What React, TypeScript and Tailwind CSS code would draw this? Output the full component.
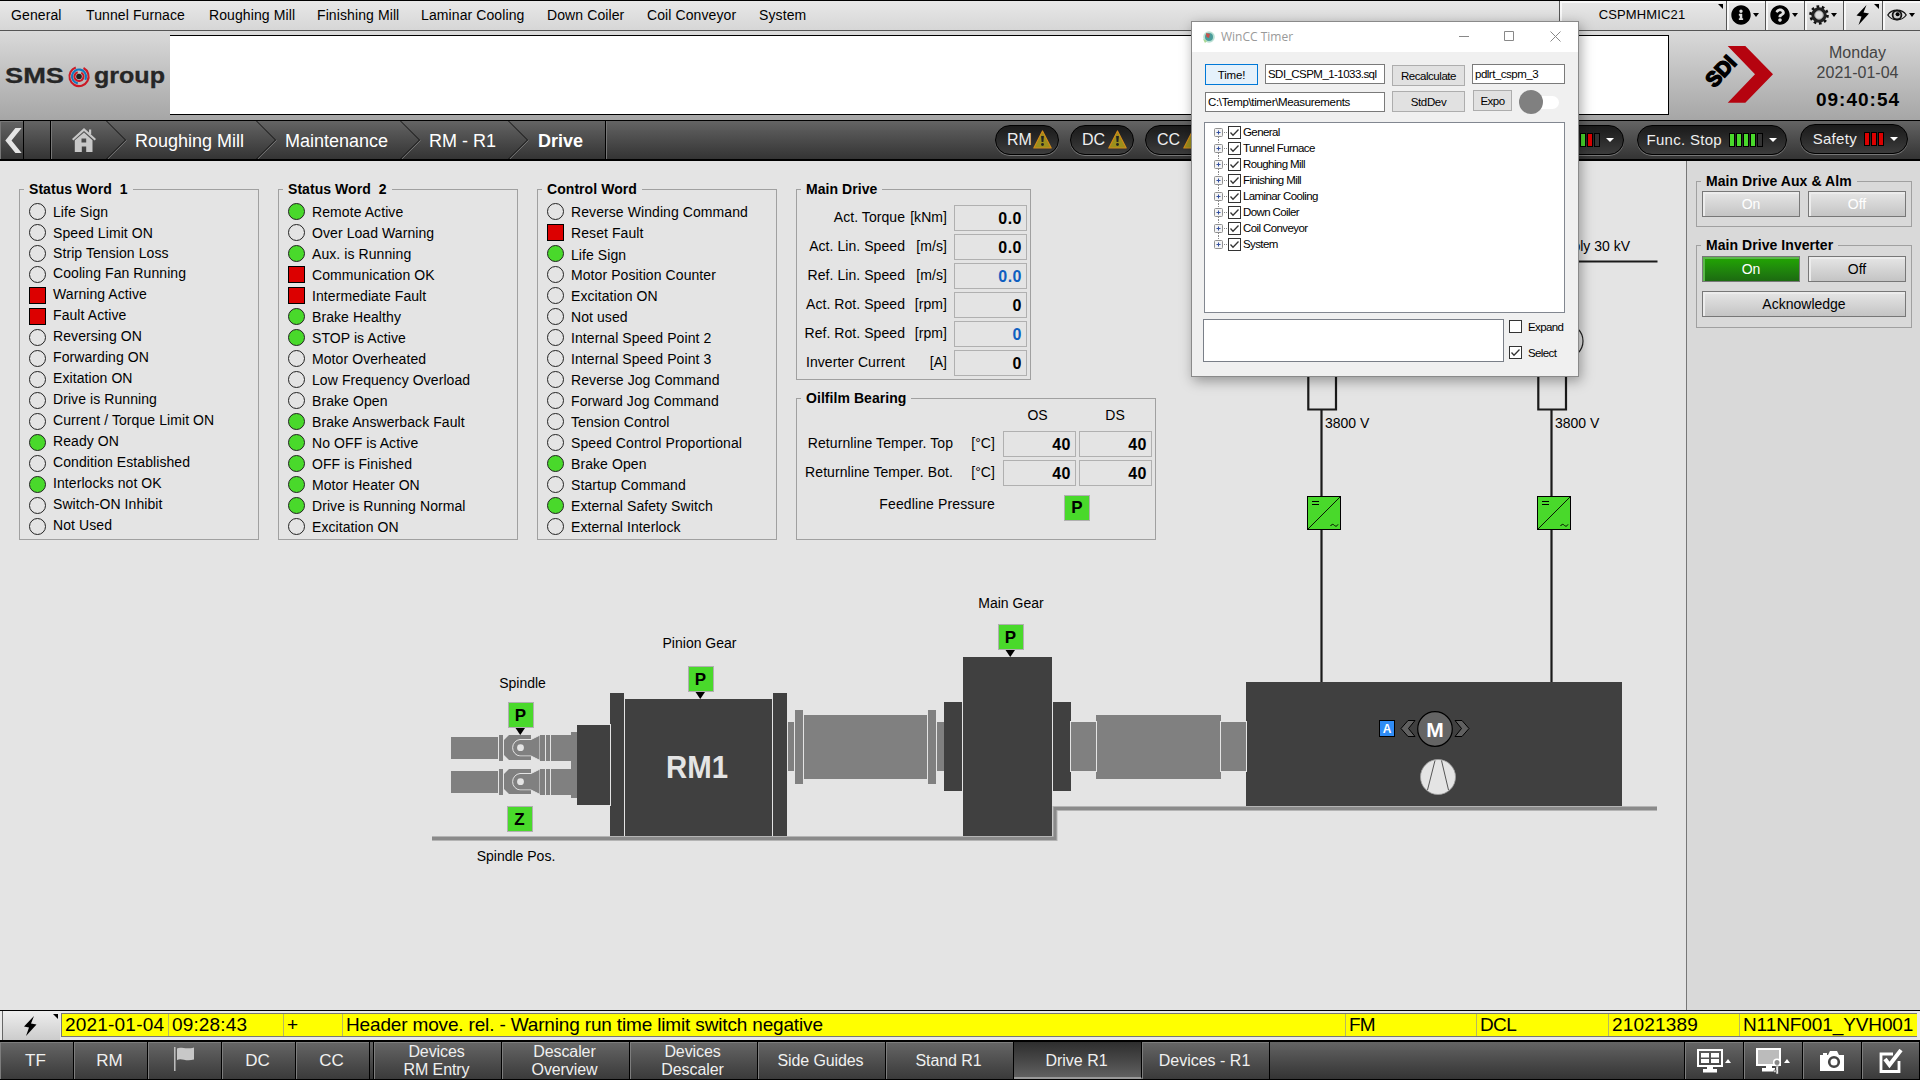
import React from "react";
import { FaInfoCircle, FaQuestionCircle } from "react-icons/fa";

type State = "off" | "on" | "err";
type Row = [string, State, number?];

const status1: Row[] = [
  ["Life Sign", "off"],
  ["Speed Limit ON", "off"],
  ["Strip Tension Loss", "off", 1],
  ["Cooling Fan Running", "off", 2],
  ["Warning Active", "err", 2],
  ["Fault Active", "err", 2],
  ["Reversing ON", "off", 2],
  ["Forwarding ON", "off", 2],
  ["Exitation ON", "off", 2],
  ["Drive is Running", "off", 2],
  ["Current / Torque Limit ON", "off", 2],
  ["Ready ON", "on", 2],
  ["Condition Established", "off", 2],
  ["Interlocks not OK", "on", 2],
  ["Switch-ON Inhibit", "off", 2],
  ["Not Used", "off", 2],
];
const status2: Row[] = [
  ["Remote Active", "on"],
  ["Over Load Warning", "off"],
  ["Aux. is Running", "on"],
  ["Communication OK", "err"],
  ["Intermediate Fault", "err"],
  ["Brake Healthy", "on"],
  ["STOP is Active", "on"],
  ["Motor Overheated", "off"],
  ["Low Frequency Overload", "off"],
  ["Brake Open", "off"],
  ["Brake Answerback Fault", "on"],
  ["No OFF is Active", "on"],
  ["OFF is Finished", "on"],
  ["Motor Heater ON", "on"],
  ["Drive is Running Normal", "on"],
  ["Excitation ON", "off"],
];
const control: Row[] = [
  ["Reverse Winding Command", "off"],
  ["Reset Fault", "err"],
  ["Life Sign", "on", -1],
  ["Motor Position Counter", "off"],
  ["Excitation ON", "off"],
  ["Not used", "off"],
  ["Internal Speed Point 2", "off"],
  ["Internal Speed Point 3", "off"],
  ["Reverse Jog Command", "off"],
  ["Forward Jog Command", "off"],
  ["Tension Control", "off"],
  ["Speed Control Proportional", "off"],
  ["Brake Open", "on"],
  ["Startup Command", "off"],
  ["External Safety Switch", "on"],
  ["External Interlock", "off"],
];

function Group({ title, className, children }: { title: string; className: string; children: React.ReactNode }) {
  return (
    <fieldset className={`border border-[#a0a0a0] ${className}`}>
      <legend className="ml-1 h-5 px-[5px] text-sm leading-5 font-bold tracking-[0.06px] whitespace-pre">{title}</legend>
      {children}
    </fieldset>
  );
}

function Lamp({ state }: { state: State }) {
  if (state === "err") return <span className="size-[17px] shrink-0 border border-black bg-[#dc0000]" />;
  if (state === "on") return <span className="size-[17px] shrink-0 rounded-full border border-[#222] bg-[#49d92b]" />;
  return <span className="size-[17px] shrink-0 rounded-full border border-[#222]" />;
}

function StatusList({ title, rows }: { title: string; rows: Row[] }) {
  return (
    <Group title={title} className="h-[361px] w-60">
      <ul className="pt-0.5 pl-[9px]">
        {rows.map(([label, state, lift]) => (
          <li key={label} className="flex h-[21px] items-center gap-[7px] text-sm tracking-[0.08px] whitespace-nowrap">
            <Lamp state={state} />
            <span className={lift === 2 ? "pb-[3px]" : lift === 1 ? "pb-[2px]" : lift === -1 ? "pt-[2px]" : ""}>{label}</span>
          </li>
        ))}
      </ul>
    </Group>
  );
}

function Value({ v, blue }: { v: string; blue?: boolean }) {
  return (
    <span
      className={`h-[26px] w-[73px] border border-[#b0b0b0] pr-1 text-right text-base leading-[25px] font-bold tracking-[0.5px] ${
        blue ? "text-[#0f5fc0]" : "text-black"
      }`}
    >
      {v}
    </span>
  );
}

const driveRows: [string, string, string, boolean?][] = [
  ["Act. Torque", "[kNm]", "0.0"],
  ["Act. Lin. Speed", "[m/s]", "0.0"],
  ["Ref. Lin. Speed", "[m/s]", "0.0", true],
  ["Act. Rot. Speed", "[rpm]", "0"],
  ["Ref. Rot. Speed", "[rpm]", "0", true],
  ["Inverter Current", "[A]", "0"],
];

function Bolt({ className }: { className: string }) {
  return (
    <svg viewBox="0 0 14 20" className={className}>
      <path d="M11 0 L1 10.5 L6 11.5 L3 20 L13.5 8.5 L8 7.5 Z" fill="#000" />
    </svg>
  );
}

function Caret({ color = "#000" }: { color?: string }) {
  return (
    <svg viewBox="0 0 8 4" className="h-1 w-2 shrink-0">
      <path d="M0 0H8L4 4Z" fill={color} />
    </svg>
  );
}

function SmallCaret() {
  return (
    <svg viewBox="0 0 6 4" className="h-1 w-1.5">
      <path d="M0 0H6L3 4Z" />
    </svg>
  );
}

function MenuCell({ children, w }: { children: React.ReactNode; w: string }) {
  return (
    <div className={`relative flex h-[29px] items-center justify-center border-l border-[#555] pr-0.5 pb-px shadow-[inset_2px_2px_0_#f8f8f8] ${w}`}>
      {children}
    </div>
  );
}

function Corner() {
  return (
    <svg viewBox="0 0 5 5" className="absolute top-[3px] right-[3px] size-[5px]">
      <path d="M0 0H5V5Z" fill="#000" />
    </svg>
  );
}

const menuItems: [string, string][] = [
  ["General", "w-[75px]"],
  ["Tunnel Furnace", "w-[123px]"],
  ["Roughing Mill", "w-[108px]"],
  ["Finishing Mill", "w-[104px]"],
  ["Laminar Cooling", "w-[126px]"],
  ["Down Coiler", "w-[100px]"],
  ["Coil Conveyor", "w-[112px]"],
  ["System", "w-[80px]"],
];

function MenuBar() {
  return (
    <div className="flex h-[31px] border-t border-b border-t-black border-b-[#555] bg-linear-to-b from-[#e8e8e8] to-[#d6d6d6]">
      <nav className="flex flex-1 items-center pb-px pl-[11px] text-sm">
        {menuItems.map(([m, w]) => (
          <span key={m} className={`whitespace-nowrap tracking-[0.1px] ${w}`}>
            {m}
          </span>
        ))}
      </nav>
      <MenuCell w="w-[167px]">
        <span className="text-[13px] tracking-[0.15px]">CSPMHMIC21</span>
        <Corner />
      </MenuCell>
      <MenuCell w="w-[39px] gap-[2px]">
        <FaInfoCircle className="size-5" />
        <SmallCaret />
      </MenuCell>
      <MenuCell w="w-[39px] gap-[2px]">
        <FaQuestionCircle className="size-5" />
        <SmallCaret />
      </MenuCell>
      <MenuCell w="w-[39px] gap-[2px]">
        <svg viewBox="0 0 20 20" className="size-5">
          <circle cx="10" cy="10" r="8.3" fill="none" stroke="#111" strokeWidth="3" strokeDasharray="2.6 2.61" />
          <circle cx="10" cy="10" r="6" fill="none" stroke="#222" strokeWidth="3.4" />
          <circle cx="10" cy="10" r="4.3" fill="#ddd" stroke="#888" strokeWidth="1" />
        </svg>
        <SmallCaret />
      </MenuCell>
      <MenuCell w="w-[39px]">
        <Bolt className="h-5 w-[15px]" />
        <Corner />
      </MenuCell>
      <MenuCell w="w-[38px] gap-[2px]">
        <svg viewBox="0 0 20 14" className="h-3.5 w-5">
          <path d="M0.8 7C5 0.6 15 0.6 19.2 7C15 13.4 5 13.4 0.8 7Z" fill="#ddd" stroke="#111" strokeWidth="1.3" />
          <circle cx="10" cy="7" r="4.4" fill="#ccc" stroke="#111" strokeWidth="1.8" />
          <circle cx="10.6" cy="6.2" r="2" />
        </svg>
        <SmallCaret />
      </MenuCell>
    </div>
  );
}

function Header() {
  return (
    <header className="flex h-[89px] items-start bg-linear-to-b from-[#dadada] to-[#a6a6a6] pt-1">
      <div className="flex h-[81px] w-[170px] items-center pl-[5px]">
        <svg viewBox="0 0 160 30" className="h-[30px] w-40" fontFamily="'Liberation Sans', Arial, sans-serif" fontWeight="bold">
          <g fontSize="21.5" fill="#262626" stroke="#262626" strokeWidth="0.3">
            <text x="0" y="22" textLength="59" lengthAdjust="spacingAndGlyphs">SMS</text>
            <text x="89" y="22" textLength="71" lengthAdjust="spacingAndGlyphs">group</text>
          </g>
          <g fill="none" strokeWidth="2.1">
            <circle cx="74" cy="15.5" r="9.6" stroke="#cc1a26" strokeDasharray="52 8.4" transform="rotate(-62 74 15.5)" />
            <circle cx="74" cy="15.5" r="7" stroke="#1478be" strokeDasharray="35 9" transform="rotate(100 74 15.5)" />
            <circle cx="74" cy="15.5" r="4.5" stroke="#cc1a26" strokeDasharray="24 4.3" transform="rotate(-60 74 15.5)" />
          </g>
          <circle cx="74" cy="15.5" r="2.8" fill="#222" />
        </svg>
      </div>
      <div className="h-20 w-[1499px] border-y border-r border-black bg-white" />
      <svg viewBox="1690 35 110 81" className="ml-[21px] h-[81px] w-[110px]">
        <path d="M1727.7 46H1745.3L1773 74.3L1745.3 102.7H1727.7L1755 74.3Z" fill="#b5030f" />
        <text
          x="0"
          y="0"
          transform="translate(1714.5 88.5) rotate(-47)"
          fontFamily="'Liberation Sans', Arial, sans-serif"
          fontWeight="bold"
          fontSize="21"
          textLength="34"
          lengthAdjust="spacingAndGlyphs"
          fill="#000"
          stroke="#000"
          strokeWidth="1.5"
        >
          SDI
        </text>
      </svg>
      <div className="flex w-[115px] flex-col items-center pt-2 text-base leading-5 text-[#444]">
        <span>Monday</span>
        <span>2021-01-04</span>
        <span className="pt-[5px] pl-px text-[19px] leading-6 font-bold tracking-[1px] text-black">09:40:54</span>
      </div>
    </header>
  );
}

function Chevron() {
  return (
    <svg viewBox="0 0 21 38" className="h-[38px] w-[21px] shrink-0" fill="none">
      <path d="M0.5 0L19.5 19L0.5 38" stroke="#111" />
      <path d="M1.8 38L20.6 19.4" stroke="#777" />
    </svg>
  );
}

function WarnPill({ label }: { label: string }) {
  return (
    <div className="flex h-[30px] w-16 items-center rounded-full border border-black bg-linear-to-b from-[#1a1a1a] to-[#3c3c3c] pl-[11px] shadow-[0_1px_0_#777]">
      <span className="w-[26px] text-base leading-5 text-[#eee]">{label}</span>
      <svg viewBox="0 0 19 19" className="mb-0.5 size-[19px]">
        <path d="M9.5 1L18.2 18H0.8Z" fill="#9c8f1c" stroke="#d18a1a" strokeWidth="1.2" strokeLinejoin="round" />
        <path d="M8.1 6H10.9L10.4 12H8.6Z" fill="#222" />
        <circle cx="9.5" cy="14.5" r="1.4" fill="#222" />
      </svg>
    </div>
  );
}

const barColor: Record<string, string> = { g: "bg-[#49d92b]", r: "bg-[#dc0000]", n: "bg-[#333]" };

function BarPill({ label, bars, w }: { label: string; bars: string; w: string }) {
  return (
    <div className={`flex h-[30px] items-center justify-end rounded-full border border-black bg-linear-to-b from-[#1a1a1a] to-[#3c3c3c] pr-[9px] shadow-[0_1px_0_#777] ${w}`}>
      <span className="mr-[7px] text-[15px] leading-5 tracking-[0.3px] whitespace-nowrap text-[#eee]">{label}</span>
      <span className="mr-1.5 flex gap-px">
        {bars.split("").map((b, i) => (
          <i key={i} className={`block h-3.5 w-1.5 border border-black ${barColor[b]}`} />
        ))}
      </span>
      <Caret color="#fff" />
    </div>
  );
}

function Breadcrumb() {
  return (
    <div className="flex h-[41px] border-t border-b-2 border-black bg-linear-to-b from-[#646464] to-[#343434] text-lg leading-[40px] text-white">
      <div className="flex w-[24px] items-center justify-center border-r border-black shadow-[inset_1px_1px_0_#777]">
        <svg viewBox="0 0 18 26" className="ml-[3px] h-[25px] w-[18px]">
          <path d="M11.5 0H18L7.5 13L18 26H11.5L1 13Z" fill="#e4e4e4" />
        </svg>
      </div>
      <div className="w-[27px] border-r border-black" />
      <div className="flex w-[55px] items-center pl-[21px] shadow-[inset_1px_0_0_#777]">
        <svg viewBox="0 0 24 24" className="h-6 w-6 shrink-0" fill="#c8c8c8">
          <path d="M12 0L24 11L22.6 12.6L12 3L1.4 12.6L0 11Z" />
          <path d="M17 1.5H19.2V6H17Z" />
          <path fillRule="evenodd" d="M12 4.5L20.5 12.2V24H14.2V18.5H9.8V24H2.8V12.2ZM9.5 10.5V14.5H14.2V10.5Z" />
        </svg>
      </div>
      <Chevron />
      <span className="w-[129px] pl-2 whitespace-nowrap">Roughing Mill</span>
      <Chevron />
      <span className="w-[123px] pl-2 whitespace-nowrap">Maintenance</span>
      <Chevron />
      <span className="w-[87px] pl-2 whitespace-nowrap">RM - R1</span>
      <Chevron />
      <span className="w-[77px] border-r border-black pl-[9px] font-bold">Drive</span>
      <div className="flex flex-1 items-start pt-1 pl-[389px] shadow-[inset_1px_0_0_#777]">
        <div className="flex gap-[11px]">
          <WarnPill label="RM" />
          <WarnPill label="DC" />
          <WarnPill label="CC" />
        </div>
        <div className="flex-1" />
        <div className="flex gap-[13px] pr-3">
          <BarPill label="Interlock" bars="grgrn" w="w-[140px]" />
          <BarPill label="Func. Stop" bars="ggggn" w="w-[150px]" />
          <div className="-mt-px">
            <BarPill label="Safety" bars="rrr" w="w-[108px]" />
          </div>
        </div>
      </div>
    </div>
  );
}

function PBox({ x, y, letter, arrow }: { x: number; y: number; letter: string; arrow?: boolean }) {
  return (
    <g>
      <rect x={x + 0.5} y={y + 0.5} width="25" height="25" fill="#49d92b" stroke="#b0b0b0" />
      <text x={x + 12.5} y={y + 19} textAnchor="middle" fontSize="17" fontWeight="bold">{letter}</text>
      {arrow && <path d={`M${x + 7.5} ${y + 26}h9.5l-4.75 7z`} />}
    </g>
  );
}

function Spindle({ dy }: { dy: number }) {
  return (
    <g transform={`translate(0 ${dy})`} fill="#808080">
      <rect x="451" y="737" width="47" height="22" />
      <rect x="499" y="735" width="4" height="26" />
      <path d="M509 735H531V760H509L504 755V740Z" />
      <path d="M531 739.5H520A8.3 8.3 0 0 0 520 756H531L540 760.5V735Z" stroke="#e4e4e4" strokeWidth="1" />
      <path d="M511.5 735H531V738.9H511.5ZM511.5 756.5H531V760H511.5Z" />
      <circle cx="520.5" cy="747.7" r="3.4" fill="#e4e4e4" />
      <rect x="540" y="735" width="5" height="26" />
      <rect x="546" y="735" width="4" height="26" />
      <rect x="551" y="735" width="20" height="26" />
    </g>
  );
}

function Inverter({ x }: { x: number }) {
  return (
    <g>
      <g stroke="#1a1a1a" strokeWidth="2.2" fill="none">
        <path d={`M${x + 1.3} 360V409.5H${x + 29}V360M${x + 14.5} 410V496M${x + 14.5} 530V682`} />
      </g>
      <rect x={x + 0.5} y="496.5" width="33" height="33" fill="#49d92b" stroke="#000" />
      <path d={`M${x + 1} 529L${x + 33} 497`} stroke="#000" strokeWidth="0.9" />
      <path d={`M${x + 5} 501.5h7M${x + 5} 504.5h7`} stroke="#000" />
      <path d={`M${x + 23.5} 526c2 -3 3.5 -1 4 -0.5s2 1.5 3.5 -1`} stroke="#000" fill="none" />
      <text x={x + 18} y="428" fontSize="14">3800 V</text>
    </g>
  );
}

function Plant() {
  const dark = "#404040";
  return (
    <svg viewBox="0 161 1686 849" className="absolute top-0 left-0 h-[849px] w-[1686px]" fontFamily="'Liberation Sans', Arial, sans-serif">
      <path d="M1300 261.5H1657.5" stroke="#1a1a1a" strokeWidth="2.2" />
      <text x="1630" y="251" fontSize="14" textAnchor="end">Main Supply 30 kV</text>
      <circle cx="1566" cy="341" r="17" fill="none" stroke="#222" strokeWidth="1.2" />
      <Inverter x={1307} />
      <Inverter x={1537} />

      <g fill="none" stroke="#b4b4b4" strokeWidth="5">
        <path d="M432 838.5H1055V808.5H1657" />
      </g>
      <g fill="none" stroke="#8a8a8a" strokeWidth="3">
        <path d="M432 838.5H1055V808.5H1657" />
      </g>

      <Spindle dy={0} />
      <Spindle dy={34} />
      <rect x="571" y="732" width="6" height="66" fill="#808080" />
      <g fill={dark}>
        <rect x="577" y="725" width="33" height="80" />
        <rect x="610" y="693" width="14" height="143" />
        <rect x="625" y="699" width="147" height="137" />
        <rect x="773" y="693" width="14" height="143" />
        <rect x="944" y="702" width="19" height="89" />
        <rect x="963" y="657" width="89" height="179" />
        <rect x="1052" y="702" width="19" height="89" />
        <rect x="1246" y="682" width="376" height="124" />
      </g>
      <path d="M610.5 724V806M962.5 701V792M1052.5 701V792" stroke="#e4e4e4" />
      <g fill="#808080">
        <rect x="788" y="722" width="6" height="49" />
        <rect x="795" y="710" width="8" height="74" />
        <rect x="804" y="715" width="123" height="64" />
        <rect x="928" y="710" width="8" height="74" />
        <rect x="937" y="722" width="7" height="49" />
        <rect x="1071" y="722" width="25" height="49" />
        <rect x="1096" y="715" width="125" height="64" />
        <rect x="1221" y="722" width="25" height="49" />
      </g>
      <path d="M787.5 721V772M1070.5 721V772M1096.5 721V772M1220.5 721V772M1246.5 721V772" stroke="#e4e4e4" />

      <text x="666" y="777.5" fontSize="31" fontWeight="bold" textLength="62" lengthAdjust="spacingAndGlyphs" fill="#e4e4e4">RM1</text>

      <g fontSize="14" textAnchor="middle">
        <text x="1011" y="608">Main Gear</text>
        <text x="699.5" y="648">Pinion Gear</text>
        <text x="522.5" y="688">Spindle</text>
        <text x="516" y="861">Spindle Pos.</text>
      </g>
      <PBox x={998} y={624} letter="P" arrow />
      <PBox x={688} y={666} letter="P" arrow />
      <PBox x={508} y={702} letter="P" arrow />
      <PBox x={507} y={806} letter="Z" />

      <rect x="1379.5" y="720.5" width="15" height="16" fill="#2f8cf5" stroke="#000" />
      <text x="1387" y="733" fontSize="12" fontWeight="bold" fill="#fff" textAnchor="middle">A</text>
      <path d="M1408 720.5H1415L1408.5 728.5L1415 736.5H1408L1401 728.5Z" fill="#606060" stroke="#000" />
      <path d="M1462 720.5H1455L1461.5 728.5L1455 736.5H1462L1469 728.5Z" fill="#606060" stroke="#000" />
      <circle cx="1435" cy="729" r="17.3" fill="#646464" stroke="#000" strokeWidth="1.2" />
      <text x="1435" y="737" fontSize="21" fontWeight="bold" fill="#fff" textAnchor="middle">M</text>
      <circle cx="1438" cy="777" r="17.5" fill="#e4e4e4" stroke="#a0a0a0" strokeWidth="0.8" />
      <path d="M1435 760.5L1427.5 790M1441.5 760.5L1448.5 790" stroke="#555" />
    </svg>
  );
}

function Main() {
  return (
    <main className="relative w-[1686px] bg-[#e4e4e4] pt-[18px] pl-[19px]">
      <div className="flex gap-[19px]">
        <StatusList title={"Status Word  1"} rows={status1} />
        <StatusList title={"Status Word  2"} rows={status2} />
        <StatusList title="Control Word" rows={control} />
        <div className="flex flex-col gap-2">
          <Group title="Main Drive" className="h-[201px] w-[235px]">
            <div className="flex flex-col gap-[3px] pt-1.5 pr-[3px]">
              {driveRows.map(([label, unit, v, blue]) => (
                <div key={label} className="flex h-[26px] justify-end text-sm leading-6 tracking-[0.06px] whitespace-nowrap">
                  <span>{label}</span>
                  <span className="mr-[7px] w-[42px] text-right">{unit}</span>
                  <Value v={v} blue={blue} />
                </div>
              ))}
            </div>
          </Group>
          <Group title="Oilfilm Bearing" className="h-[152px] w-[360px]">
            <div className="flex flex-col gap-[3px] pt-px pr-[3px] text-sm">
              <div className="flex h-[19px] justify-end leading-3">
                <span className="mr-1 w-[73px] text-center">OS</span>
                <span className="w-[74px] text-center">DS</span>
              </div>
              {["Top", "Bot."].map((pos) => (
                <div key={pos} className="flex h-[26px] justify-end leading-6 tracking-[0.08px] whitespace-nowrap">
                  <span>Returnline Temper. {pos}</span>
                  <span className="mr-[8px] w-[42px] text-right">[°C]</span>
                  <Value v="40" />
                  <span className="w-[3px]" />
                  <Value v="40" />
                </div>
              ))}
              <div className="flex justify-end pt-[6px] pr-[62px]">
                <span className="mr-[69px] leading-[19px] tracking-[0.12px]">Feedline Pressure</span>
                <span className="flex size-[26px] items-center justify-center border border-[#b0b0b0] bg-[#49d92b] text-[17px] font-bold">P</span>
              </div>
            </div>
          </Group>
        </div>
      </div>
      <Plant />
    </main>
  );
}

function Button({ label, kind, w }: { label: string; kind?: "disabled" | "active"; w: string }) {
  const look =
    kind === "active"
      ? "bg-linear-to-b from-[#22a800] to-[#1c6a10] text-white shadow-[inset_2px_2px_0_#5bb84a]"
      : kind === "disabled"
        ? "bg-linear-to-b from-[#e6e6e6] to-[#c4c4c4] text-white shadow-[inset_2px_2px_0_#ececec]"
        : "bg-linear-to-b from-[#e6e6e6] to-[#c4c4c4] text-black shadow-[inset_2px_2px_0_#ececec]";
  return <div className={`h-[26px] border border-[#777] text-center text-sm leading-6 ${look} ${w}`}>{label}</div>;
}

function SidePanel() {
  return (
    <aside className="flex flex-1 flex-col gap-2 border-l border-[#777] bg-[#d9d9d9] pt-2.5 pl-[9px]">
      <Group title="Main Drive Aux & Alm" className="h-[56px] w-[216px]">
        <div className="flex gap-2 pl-[5px]">
          <Button label="On" kind="disabled" w="w-[98px]" />
          <Button label="Off" kind="disabled" w="w-[98px]" />
        </div>
      </Group>
      <Group title="Main Drive Inverter" className="h-[93px] w-[216px]">
        <div className="flex flex-wrap gap-x-2 gap-y-[9px] pt-px pl-[5px]">
          <Button label="On" kind="active" w="w-[98px]" />
          <Button label="Off" w="w-[98px]" />
          <Button label="Acknowledge" w="w-[204px]" />
        </div>
      </Group>
    </aside>
  );
}

function AlarmRow() {
  const cell = "border-r border-[#b8b860] pl-[3px]";
  return (
    <div className="flex h-[31px] border-t border-b border-black bg-[#e8e8e8]">
      <div className="relative mr-px ml-0.5 flex w-[58px] items-center justify-center border-l border-[#666] bg-linear-to-b from-[#eee] to-[#ccc] pr-1">
        <Bolt className="h-5 w-4" />
        <svg viewBox="0 0 5 5" className="absolute top-[3px] right-[2px] size-[5px]"><path d="M0 0H5V5Z" /></svg>
      </div>
      <div className="mt-0.5 mb-[3px] flex flex-1 border-y border-l border-[#777] bg-[#ffff00] text-[19px] leading-[22px] whitespace-nowrap">
        <span className={`w-[107px] tracking-[0.2px] ${cell}`}>2021-01-04</span>
        <span className={`w-[115px] tracking-[0.15px] ${cell}`}>09:28:43</span>
        <span className={`w-[59px] ${cell}`}>+</span>
        <span className={`w-[1003px] tracking-[-0.16px] ${cell}`}>Header move. rel. - Warning run time limit switch negative</span>
        <span className={`w-[131px] tracking-[-0.8px] ${cell}`}>FM</span>
        <span className={`w-[132px] tracking-[-0.6px] ${cell}`}>DCL</span>
        <span className={`w-[131px] tracking-[0.2px] ${cell}`}>21021389</span>
        <span className="flex-1 pl-[3px] tracking-[-0.1px]">N11NF001_YVH001</span>
      </div>
      <div className="w-[3px]" />
    </div>
  );
}

const tab =
  "flex items-center justify-center border-r border-black shadow-[inset_1px_1px_0_#7d7d7d] bg-linear-to-b from-[#666] to-[#3a3a3a]";

function BottomNav() {
  return (
    <div className="flex h-[39px] border-t border-b border-black bg-linear-to-b from-[#646464] to-[#343434] text-center text-base leading-[18px] text-[#f0f0f0]">
      {["TF", "RM", "flag", "DC", "CC"].map((t) => (
        <div key={t} className={`w-[74px] pr-0.5 text-[17px] ${tab}`}>
          {t === "flag" ? (
            <svg viewBox="0 0 20 24" className="mb-1 h-6 w-5">
              <path d="M0.8 0V24" stroke="#c8c8c8" strokeWidth="1.4" />
              <path d="M3 1.5C7 -1 11 3 20 0.5V12.5C11 15 8 10.5 3 13Z" fill="#c8c8c8" />
            </svg>
          ) : (
            t
          )}
        </div>
      ))}
      <div className="w-1 border-r border-black" />
      {["Devices\nRM Entry", "Descaler\nOverview", "Devices\nDescaler", "Side Guides", "Stand R1"].map((t) => (
        <div key={t} className={`w-32 pr-0.5 tracking-[-0.1px] whitespace-pre ${tab}`}>{t}</div>
      ))}
      <div className="flex w-32 items-center justify-center border-r border-b-2 border-r-black border-b-[#999] bg-linear-to-b from-[#2e2e2e] to-[#606060] pt-0.5 pr-0.5">
        Drive R1
      </div>
      <div className={`w-32 pr-0.5 ${tab}`}>Devices - R1</div>
      <div className="flex-1 border-r border-black" />
      <div className={`w-[59px] gap-0.5 ${tab}`}>
        <svg viewBox="0 0 26 24" className="h-6 w-[26px]" fill="#fff">
          <path fillRule="evenodd" d="M0 0H26V18H0ZM2 2V16H24V2Z" />
          <path d="M4 4H12V8.4H4ZM14 4H22V8.4H14ZM4 10H12V14H4ZM14 10H22V14H14ZM10 18H16V20H20V23.5H6V20H10Z" />
        </svg>
        <svg viewBox="0 0 6 4" className="h-1 w-1.5"><path d="M0 4H6L3 0Z" fill="#fff" /></svg>
      </div>
      <div className={`w-[59px] gap-0.5 ${tab}`}>
        <svg viewBox="0 0 26 26" className="h-[26px] w-[26px]" fill="#fff">
          <path d="M0 0H25V18H0Z" />
          <path d="M2 2H23V16H2Z" fill="#bbb" />
          <path d="M10 18H16V20H19V23.5H6V20H10Z" />
          <circle cx="21" cy="14.5" r="3.3" fill="#888" stroke="#fff" strokeWidth="1.6" />
          <path d="M20 18H22.3V26H20ZM18 22H20V24.5H18Z" stroke="#333" strokeWidth="0.5" />
        </svg>
        <svg viewBox="0 0 6 4" className="h-1 w-1.5"><path d="M0 4H6L3 0Z" fill="#fff" /></svg>
      </div>
      <div className={`w-[59px] ${tab}`}>
        <svg viewBox="0 0 24 20" className="h-5 w-6" fill="#fff">
          <path d="M0 4H3V2H7V4H8L10 0H17L19 4H24V20H0Z" />
          <circle cx="14" cy="11" r="4.8" fill="#fff" stroke="#444" strokeWidth="2.6" />
        </svg>
      </div>
      <div className={`w-[58px] ${tab}`}>
        <svg viewBox="0 0 24 24" className="h-6 w-6" fill="none" stroke="#fff">
          <path d="M20 12V22.5H2V5H14" strokeWidth="2.8" />
          <path d="M6 10L10.5 16L22 1" strokeWidth="4" />
        </svg>
      </div>
    </div>
  );
}

function Check({ checked }: { checked?: boolean }) {
  return (
    <svg viewBox="0 0 13 13" className="size-[13px] shrink-0" fill="none">
      <rect x="0.5" y="0.5" width="12" height="12" fill="#fff" stroke="#333" />
      {checked && <path d="M2.5 6.5L5 9.2L10.5 3.5" stroke="#333" strokeWidth="1.3" />}
    </svg>
  );
}

const btn = "h-[21px] border border-[#adadad] bg-[#e1e1e1] text-center leading-[20px]";
const input = "h-5 border border-[#7a7a7a] bg-white pl-[2px] leading-[18px]";

function TimerDialog() {
  return (
    <div className="absolute top-[21px] left-[1191px] flex h-[356px] w-[388px] flex-col border border-[#8a8a8a] bg-[#f0f0f0] text-[11.5px] tracking-[-0.6px] text-black shadow-[2px_4px_12px_rgba(0,0,0,0.35)]">
      <div className="flex h-[30px] items-center bg-white pl-2.5">
        <svg viewBox="0 0 14 14" className="size-3.5">
          <circle cx="7" cy="7" r="5.8" fill="#a8d8c8" opacity="0.8" />
          <circle cx="7" cy="7" r="4" fill="#4a9c9a" />
          <path d="M4 3L8 4L7 8L4.5 7Z" fill="#c8504a" />
          <path d="M1 9L5 11L3 13Z" fill="#a8d890" />
        </svg>
        <span className="ml-[5px] flex-1 font-['Open_Sans',sans-serif] text-xs text-[#999] tracking-[0px]">WinCC Timer</span>
        <svg viewBox="0 0 102 11" className="mr-[17px] mb-px h-[11px] w-[102px]" fill="none" stroke="#888">
          <path d="M0 5.5H10M45.5 0.5H54.5V9.5H45.5ZM91.5 0.5L101.5 10.5M101.5 0.5L91.5 10.5" />
        </svg>
      </div>
      <div className="flex pt-3 pl-[13px]">
        <div className="h-[21px] w-[53px] border border-[#0078d7] bg-[#e5f1fb] text-center leading-[20px] tracking-[-0.2px]">Time!</div>
        <div className={`ml-[7px] w-[120px] tracking-[-0.55px] ${input}`}>SDI_CSPM_1-1033.sql</div>
        <div className={`mt-px ml-[7px] w-[73px] tracking-[-0.45px] ${btn}`}>Recalculate</div>
        <div className={`ml-[7px] w-[93px] tracking-[-0.5px] ${input}`}>pdlrt_cspm_3</div>
      </div>
      <div className="flex items-start pt-[4px] pl-[13px]">
        <div className={`mt-[2px] w-[180px] tracking-[-0.34px] ${input}`}>C:\Temp\timer\Measurements</div>
        <div className={`mt-px ml-[7px] w-[73px] tracking-[-0.35px] ${btn}`}>StdDev</div>
        <div className={`ml-2 w-[39px] tracking-[-0.5px] ${btn}`}>Expo</div>
        <div className="ml-[7px] flex h-6 w-[41px] items-center">
          <span className="z-10 size-6 rounded-full bg-[#808080]" />
          <span className="-ml-2 h-[13px] w-6 rounded-full bg-white" />
        </div>
      </div>
      <div className="mt-[8px] ml-3 h-[191px] w-[361px] border border-[#828790] bg-white pt-px pl-[9px]">
        {["General", "Tunnel Furnace", "Roughing Mill", "Finishing Mill", "Laminar Cooling", "Down Coiler", "Coil Conveyor", "System"].map((t, i) => (
          <div key={t} className="flex h-4 items-center">
            <svg viewBox="0 0 14 16" className="h-4 w-3.5 shrink-0" fill="none">
              {i > 0 && <path d="M4.5 0V4" stroke="#888" strokeDasharray="1 1" />}
              {i < 7 && <path d="M4.5 13V16" stroke="#888" strokeDasharray="1 1" />}
              <rect x="0.5" y="4.5" width="8" height="8" rx="1" fill="#f4f4f4" stroke="#919191" />
              <path d="M2.5 8.5H6.5M4.5 6.5V10.5" stroke="#3450a0" />
              <path d="M10 8.5H14" stroke="#888" strokeDasharray="1 1" />
            </svg>
            <Check checked />
            <span className="ml-[2px] pt-px whitespace-nowrap">{t}</span>
          </div>
        ))}
      </div>
      <div className="mt-[6px] ml-[11px] flex">
        <div className="h-[43px] w-[301px] border border-[#7a7f88] bg-white" />
        <div className="ml-[5px] flex flex-col gap-[10px] pt-px">
          <div className="flex h-4 items-start gap-1.5 leading-[15px]"><Check /><span>Expand</span></div>
          <div className="flex h-4 items-start gap-1.5 leading-[15px]"><Check checked /><span>Select</span></div>
        </div>
      </div>
    </div>
  );
}

export default function App() {
  return (
    <div className="relative flex h-[1080px] w-[1920px] flex-col overflow-hidden bg-[#e4e4e4] font-['Liberation_Sans',Arial,sans-serif] text-black">
      <MenuBar />
      <Header />
      <Breadcrumb />
      <div className="flex h-[849px]">
        <Main />
        <SidePanel />
      </div>
      <AlarmRow />
      <BottomNav />
      <TimerDialog />
    </div>
  );
}
